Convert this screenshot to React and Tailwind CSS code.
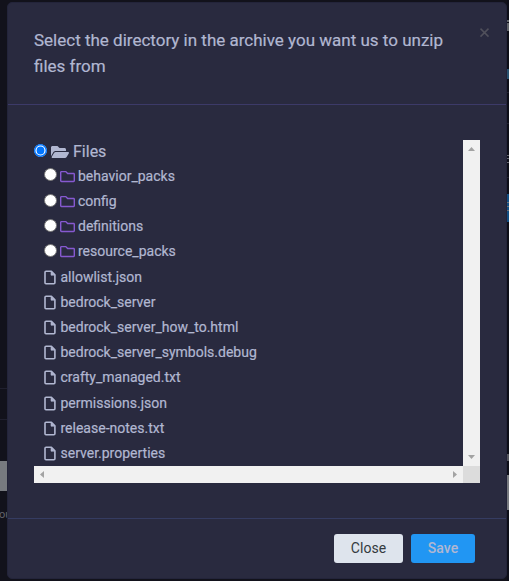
import React from "react";
import { FaFolderOpen, FaRegFolder } from "react-icons/fa";

const folders = ["behavior_packs", "config", "definitions", "resource_packs"];
const files = [
  "allowlist.json",
  "bedrock_server",
  "bedrock_server_how_to.html",
  "bedrock_server_symbols.debug",
  "crafty_managed.txt",
  "permissions.json",
  "release-notes.txt",
  "server.properties",
];

function Radio({ checked = false }) {
  return (
    <svg viewBox="0 0 13 13" className="size-[13px] shrink-0" role="radio" aria-checked={checked}>
      {checked ? (
        <>
          <circle cx="6.5" cy="6.5" r="6.3" fill="#fff" />
          <circle cx="6.5" cy="6.5" r="5.8" fill="none" stroke="#0075ff" strokeWidth="1.4" />
          <circle cx="6.5" cy="6.5" r="3.9" fill="#0075ff" />
        </>
      ) : (
        <circle cx="6.5" cy="6.5" r="6" fill="#fff" stroke="#767676" />
      )}
    </svg>
  );
}

function FileIcon() {
  return (
    <svg viewBox="0 0 12 15" className="h-[15px] w-[12px] shrink-0" fill="none" stroke="currentColor">
      <path
        d="M2 1.3H7.4L10.9 4.8V12.7Q10.9 13.7 9.9 13.7H2Q1 13.7 1 12.7V2.3Q1 1.3 2 1.3Z"
        strokeWidth="1.6"
        strokeLinejoin="round"
      />
      <path d="M7 1.5V5.2H10.7Z" fill="currentColor" strokeWidth="0.6" />
    </svg>
  );
}

function Arrow({ points, box }) {
  return (
    <svg viewBox={"0 0 " + box} className="shrink-0" width={box.split(" ")[0]} height={box.split(" ")[1]}>
      <polygon points={points} fill="#a3a3a3" />
    </svg>
  );
}

function Header() {
  return (
    <header className="flex h-[102px] shrink-0 items-start justify-between border-b border-[#3c3a68] pt-[24px] pr-[16px] pl-[26px]">
      <h5 className="w-[420px] text-[17px] leading-[26px] font-normal text-[#b1b7d1] [-webkit-text-stroke:0.2px]">
        Select the directory in the archive you want us to unzip files from
      </h5>
      <button aria-label="Dismiss" className="flex size-[11px]">
        <svg viewBox="0 0 11 11" className="size-[11px]" stroke="#50505b" strokeWidth="1.5">
          <path d="M1.5 1.6 9.5 9.6M9.5 1.6 1.5 9.6" />
        </svg>
      </button>
    </header>
  );
}

function Tree() {
  return (
    <div className="h-[326px] min-w-0 flex-1 overflow-hidden text-[14px] text-[#b1b7d1] [-webkit-text-stroke:0.2px]">
      <div className="flex h-[23.8px] items-center text-[16px]">
        <span className="-mt-[2px] flex">
          <Radio checked />
        </span>
        <FaFolderOpen className="ml-[4px] h-[18px] w-[18px]" />
        <span className="ml-[4px]">Files</span>
      </div>
      {folders.map((name) => (
        <div key={name} className="flex h-[25.2px] items-center pl-[10px]">
          <span className="-mt-[3px] flex">
            <Radio />
          </span>
          <FaRegFolder className="ml-[3px] size-[15px] text-[#8659d0]" />
          <span className="ml-[3px]">{name}</span>
        </div>
      ))}
      {files.map((name) => (
        <div key={name} className="flex h-[25.2px] items-center pl-[9.5px]">
          <FileIcon />
          <span className="ml-[5px]">{name}</span>
        </div>
      ))}
    </div>
  );
}

function ScrollPane() {
  return (
    <div className="flex h-[343px] w-[446px] flex-col">
      <div className="flex h-[326px]">
        <Tree />
        <div className="flex w-[17px] flex-col items-center justify-between bg-[#f1f1f1] pt-[7px] pb-[7px]">
          <Arrow box="7 4" points="0,4 7,4 3.5,0" />
          <Arrow box="7 4" points="0,0 7,0 3.5,4" />
        </div>
      </div>
      <div className="flex h-[17px]">
        <div className="flex flex-1 items-center justify-between bg-[#f1f1f1] px-[6px]">
          <Arrow box="4 7" points="4,0 4,7 0,3.5" />
          <Arrow box="4 7" points="0,0 0,7 4,3.5" />
        </div>
        <div className="w-[17px] bg-[#dcdcdc]" />
      </div>
    </div>
  );
}

function LeftEdge() {
  return (
    <div className="flex w-[7px] shrink-0 flex-col overflow-hidden bg-[#12121b]">
      <div className="h-[389px] border-b border-[#20202e]" />
      <div className="h-[31px] border-b border-[#20202e]" />
      <div className="h-[41px]" />
      <div className="h-[30px] bg-[#777a7f]" />
      <div className="mt-[16px] -ml-[1px] text-[11px] leading-[16px] text-[#63636b]">ou</div>
    </div>
  );
}

function RightEdge() {
  return (
    <div className="flex w-[2px] shrink-0 flex-col overflow-hidden bg-[#0d0e18]">
      <div className="mt-[20px] h-[2px] bg-[#62656a]" />
      <div className="mt-[1px] h-[8px] bg-[#62656a]" />
      <div className="mt-[38px] h-[10px] bg-[#28516e]" />
      <div className="mt-[13px] h-[1px] bg-[#20202e]" />
      <div className="mt-[30px] h-[1px] bg-[#20202e]" />
      <div className="mt-[31px] h-[1px] bg-[#666771]" />
      <div className="mt-[2px] h-[1px] bg-[#666771]" />
      <div className="mt-[3px] h-[1px] bg-[#666771]" />
      <div className="mt-[14px] h-[1px] bg-[#20202e]" />
      <div className="mt-[16px] flex h-[28px] flex-col gap-[3px] bg-[#124e82] pt-[8px]">
        <div className="h-[1px] bg-[#66717d]" />
        <div className="h-[1px] bg-[#66717d]" />
        <div className="h-[1px] bg-[#66717d]" />
      </div>
      <div className="mt-[232px] h-[7px] bg-[#55565e]" />
      <div className="mt-[14px] h-[35px] bg-[#777a7f]" />
    </div>
  );
}

export default function App() {
  return (
    <div className="flex h-[581px] w-[509px] overflow-hidden bg-[#12121b] font-['Roboto','Liberation_Sans',sans-serif]">
      <LeftEdge />
      <section
        role="dialog"
        className="mt-[2px] flex h-[577px] w-[500px] flex-col overflow-hidden rounded-[5px] border border-[#23243a] bg-[#292a3f]"
      >
        <Header />
        <main className="flex h-[413px] shrink-0 pt-[35px] pl-[26px]">
          <ScrollPane />
        </main>
        <footer className="flex flex-1 items-start justify-end gap-[8px] border-t border-[#353c61] pt-[15px] pr-[31px] text-[14px]">
          <button className="h-[29px] w-[69px] rounded-[3px] bg-[#dee4ed] tracking-[0.1px] text-[#343a40]">Close</button>
          <button className="h-[29px] w-[64px] rounded-[3px] bg-[#2196f3] font-medium text-[#b1b7d1]">Save</button>
        </footer>
      </section>
      <RightEdge />
    </div>
  );
}
